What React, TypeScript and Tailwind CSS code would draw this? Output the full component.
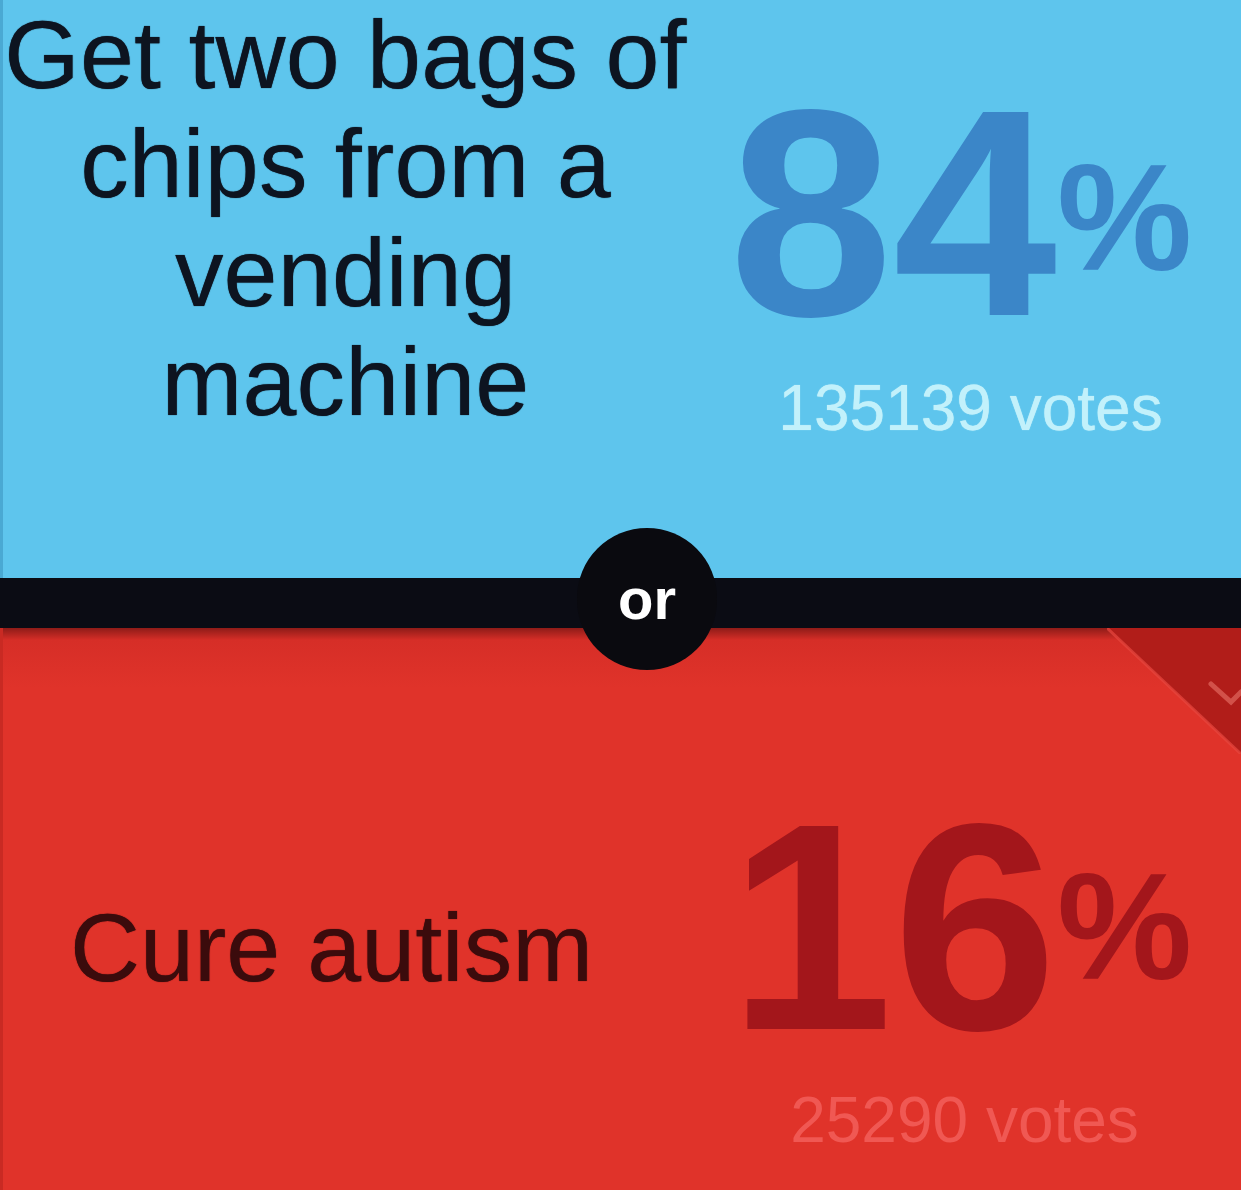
import React from "react";

export default function App() {
  return (
    <div className="relative w-[1241px] h-[1190px] overflow-hidden font-['Liberation_Sans',Arial,sans-serif] flex flex-col">
      {/* Top / blue option */}
      <div className="h-[578px] flex bg-[#5ec5ed] border-l-[3px] border-[#4aa9d3]">
        <div className="w-[685px] text-center text-[97px] leading-[109px] text-[#0d1420] tracking-[0.2px] [text-shadow:0_0_1px_#0d1420]">
          <div>Get two bags of</div>
          <div>chips from a</div>
          <div>vending</div>
          <div>machine</div>
        </div>
        <div className="flex-1 flex flex-col items-center pt-[66px] pr-[8px]">
          <div className="flex items-start text-[#3b86c8]">
            <span className="text-[295px] leading-none font-bold">84</span>
            <span className="text-[152px] leading-none font-bold mt-[75px]">%</span>
          </div>
          <div className="mt-[15px] ml-[20px] text-[64px] leading-none text-[#c2f1fb] [text-shadow:0_0_1px_#c2f1fb]">
            135139 votes
          </div>
        </div>
      </div>

      {/* Divider band */}
      <div className="h-[50px] bg-[#0b0c14]" />

      {/* Bottom / red option */}
      <div className="relative flex-1 flex bg-[linear-gradient(to_bottom,#8e1c18_0px,#d62e27_12px,#e0332a_60px)] border-l-[3px] border-[#c92a23]">
        <div className="w-[685px] pr-[28px] pt-[265px] text-center text-[97px] leading-[109px] text-[#3b0b0c] [text-shadow:0_0_1px_#3b0b0c]">
          Cure autism
        </div>
        <div className="flex-1 flex flex-col items-center pt-[152px] pr-[8px]">
          <div className="flex items-start text-[#a3161b]">
            <span className="text-[295px] leading-none font-bold">16</span>
            <span className="text-[152px] leading-none font-bold mt-[70px]">%</span>
          </div>
          <div className="mt-[13px] ml-[8px] text-[64px] leading-none text-[#f05853]">
            25290 votes
          </div>
        </div>

        {/* selected corner */}
        <svg
          className="absolute right-0 top-0"
          width="134"
          height="126"
          viewBox="0 0 134 126"
        >
          <polygon points="0,0 134,0 134,126" fill="#b11d19" />
          <line x1="0" y1="0" x2="134" y2="126" stroke="#e8473f" strokeWidth="3" opacity="0.7" />
          <polyline
            points="104,56 124,74 134,64"
            fill="none"
            stroke="#d85a52"
            strokeWidth="5"
            strokeLinecap="round"
            opacity="0.85"
          />
        </svg>
      </div>

      {/* "or" badge */}
      <div className="absolute left-[577px] top-[528px] w-[140px] h-[142px] rounded-full bg-[#0a0a0f] flex items-center justify-center">
        <span className="text-white font-bold text-[58px] leading-none">or</span>
      </div>
    </div>
  );
}
